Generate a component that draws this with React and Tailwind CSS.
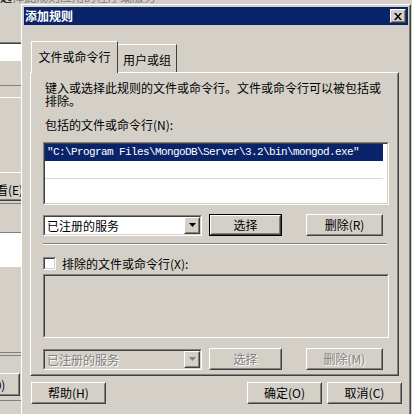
const GRAY = "bg-[#d4d0c8]";

function Raised({ className = "", children }) {
  return (
    <div
      className={`${GRAY} border border-t-white border-l-white border-r-[#404040] border-b-[#404040] ${className}`}
    >
      <div className="h-full w-full border border-transparent border-r-[#808080] border-b-[#808080] flex items-center justify-center">
        {children}
      </div>
    </div>
  );
}

function Sunken({ className = "", inner = "", children }) {
  return (
    <div
      className={`shrink-0 border border-t-[#808080] border-l-[#808080] border-r-white border-b-white ${className}`}
    >
      <div
        className={`h-full border border-t-[#404040] border-l-[#404040] border-r-[#d4d0c8] border-b-[#d4d0c8] ${inner}`}
      >
        {children}
      </div>
    </div>
  );
}

const DISABLED = "text-[#808080] [text-shadow:1px_1px_0_#ffffff]";

function Button({ label, w, disabled, isDefault, className = "" }) {
  return (
    <div
      className={`${w} h-[22px] shrink-0 ${isDefault ? "border border-black" : ""} ${className}`}
    >
      <Raised className="h-full w-full">
        <span
          className={`text-[12px] leading-none whitespace-nowrap ${disabled ? DISABLED : "text-black"}`}
        >
          {label}
        </span>
      </Raised>
    </div>
  );
}

function Combo({ disabled }) {
  return (
    <Sunken
      className="w-[159px] h-[21px]"
      inner={`flex ${disabled ? GRAY : "bg-white"}`}
    >
      <span
        className={`flex-1 pl-[2px] text-[12px] leading-[17px] whitespace-nowrap ${disabled ? DISABLED : "text-black"}`}
      >
        已注册的服务
      </span>
      <Raised className="w-[16px] h-full">
        <svg width="7" height="4" viewBox="0 0 7 4">
          <path d="M0 0h7L3.5 4z" fill={disabled ? "#808080" : "#000"} />
        </svg>
      </Raised>
    </Sunken>
  );
}

// slice of the window that sits behind the dialog
function BehindWindow() {
  const line = (c) => `h-px ${c}`;
  return (
    <div className="flex flex-col">
      <div className="h-[4px] overflow-hidden">
        <div className="mt-[-9px] whitespace-nowrap text-[12px] leading-[12px]">
          <span>选</span>
          <span className="text-[#808080]">择此规则应用的程序或服务</span>
        </div>
      </div>
      <div className="w-[21px] flex flex-col overflow-hidden">
        <div className="h-[38px]" />
        <div className={line("bg-[#808080]")} />
        <div className={line("bg-[#404040]")} />
        <div className="h-[17px] bg-white" />
        <div className="h-[24px]" />
        <div className={line("bg-[#808080]")} />
        <div className="h-[11px]" />
        <div className={line("bg-white")} />
        <div className="h-[74px]" />
        <div className={line("bg-white")} />
        <div className="h-[9px]" />
        <div className="h-[16px] flex items-center">
          <span className="ml-[-16px] whitespace-nowrap text-[12px] leading-none">
            查看(E)
          </span>
        </div>
        <div className="h-px" />
        <div className={line("bg-[#808080]")} />
        <div className={line("bg-[#404040]")} />
        <div className="h-[2px]" />
        <div className={line("bg-[#808080]")} />
        <div className="h-[28px]" />
        <div className={line("bg-[#808080]")} />
        <div className="h-[34px] bg-white" />
        <div className="h-[85px]" />
        <div className={line("bg-[#808080]")} />
        <div className="h-[2px]" />
        <div className={line("bg-[#808080]")} />
        <div className="h-[17px]" />
        <div className="h-[23px] flex">
          <Raised className="w-[40px] ml-[-20px] h-full shrink-0">
            <span className="text-[12px] leading-none">0)</span>
          </Raised>
        </div>
        <div className="h-[4px]" />
        <div className={line("bg-[#808080]")} />
      </div>
    </div>
  );
}

function Dialog() {
  return (
    <div className="absolute left-[21px] top-[4px] w-[390px] h-[412px] bg-[#d4d0c8] border border-t-white border-l-white border-r-[#404040] border-b-[#404040]">
      <div className="h-full border border-t-[#d4d0c8] border-l-[#d4d0c8] border-r-[#808080] border-b-[#808080] p-px flex flex-col">
        {/* Title bar */}
        <div className="h-[18px] shrink-0 bg-[#0a246a] flex items-center pl-px pr-[2px]">
          <span className="flex-1 text-[12px] leading-none font-bold text-white">
            添加规则
          </span>
          <Raised className="w-[16px] h-[14px]">
            <svg width="8" height="7" viewBox="0 0 8 7">
              <path
                d="M0 0h2l2 2.5L6 0h2L5 3.5 8 7H6L4 4.5 2 7H0l3-3.5z"
                fill="#000"
              />
            </svg>
          </Raised>
        </div>

        {/* Tabs */}
        <div className="relative z-10 mt-[16px] h-[31px] flex items-end pl-[7px]">
          <div className="w-[87px] h-[32px] mb-[-1px] bg-[#d4d0c8] border-t border-l border-r border-t-white border-l-white border-r-[#404040] flex items-center justify-center pb-[2px]">
            <span className="text-[12px] leading-none">文件或命令行</span>
          </div>
          <div className="w-[59px] h-[28px] bg-[#d4d0c8] border-t border-r border-t-white border-r-[#404040] flex items-center justify-center pt-[2px]">
            <span className="text-[12px] leading-none">用户或组</span>
          </div>
        </div>

        {/* Tab panel */}
        <div className="ml-[6px] w-[369px] h-[304px] shrink-0 border border-t-white border-l-white border-r-[#404040] border-b-[#404040]">
          <div className="h-full border border-transparent border-r-[#808080] border-b-[#808080] pl-[11px] pt-[7px] flex flex-col">
            <p className="pl-[2px] h-[13px] text-[12px] leading-[13px] whitespace-nowrap">
              键入或选择此规则的文件或命令行。文件或命令行可以被包括或
            </p>
            <p className="pl-[2px] h-[13px] text-[12px] leading-[13px]">排除。</p>
            <p className="mt-[12px] pl-[2px] text-[12px] leading-[12px]">
              包括的文件或命令行(N):
            </p>

            <Sunken className="mt-[11px] w-[346px] h-[63px]" inner="bg-white">
              <div className="h-[17px] mr-[4px] bg-[#0a246a] flex items-center pl-[2px]">
                <span className="font-['Liberation_Mono',monospace] text-[11px] tracking-[-0.6px] leading-none text-white whitespace-nowrap">
                  "C:\Program Files\MongoDB\Server\3.2\bin\mongod.exe"
                </span>
              </div>
              <div className="h-[18px] mr-[4px] border-b border-[#d8d8d8]" />
            </Sunken>

            <div className="mt-[9px] h-[22px] flex items-center">
              <Combo />
              <Button label="选择" w="w-[73px]" isDefault className="ml-[7px]" />
              <Button label="删除(R)" w="w-[77px]" className="ml-[24px]" />
            </div>

            <div className="mt-[7px] w-[344px] h-[2px] border-t border-b border-t-[#808080] border-b-white" />

            <div className="mt-[12px] h-[13px] flex items-center">
              <Sunken className="w-[13px] h-[13px]" inner="bg-white" />
              <span className="ml-[6px] text-[12px] leading-none">
                排除的文件或命令行(X):
              </span>
            </div>

            <Sunken className="mt-[4px] w-[346px] h-[64px]" inner={GRAY} />

            <div className="mt-[10px] h-[22px] flex items-center">
              <Combo disabled />
              <Button label="选择" w="w-[73px]" disabled className="ml-[7px]" />
              <Button label="删除(M)" w="w-[77px]" disabled className="ml-[24px]" />
            </div>
          </div>
        </div>

        {/* Footer buttons */}
        <div className="mt-[6px] h-[22px] flex items-center pr-[6px]">
          <Button label="帮助(H)" w="w-[75px]" className="ml-[7px]" />
          <div className="flex-1" />
          <Button label="确定(O)" w="w-[75px]" />
          <Button label="取消(C)" w="w-[75px]" className="ml-[5px]" />
        </div>
      </div>
    </div>
  );
}

export default function App() {
  return (
    <div className="relative w-[412px] h-[414px] overflow-hidden bg-[#d4d0c8] font-['Noto_Sans_CJK_SC',sans-serif] text-black">
      <BehindWindow />
      <Dialog />
    </div>
  );
}
